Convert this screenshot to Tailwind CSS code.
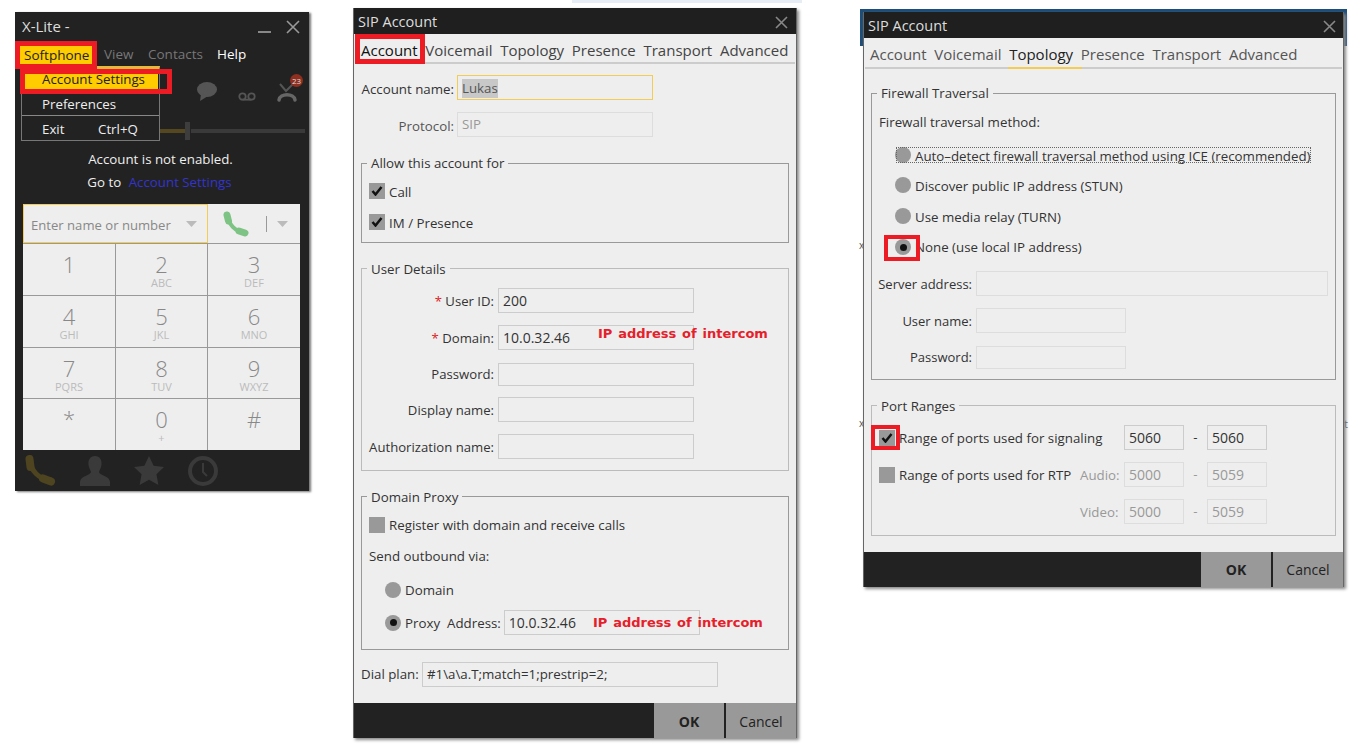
<!DOCTYPE html>
<html><head><meta charset="utf-8"><title>X-Lite SIP Account setup</title>
<script src="https://cdn.jsdelivr.net/npm/@tailwindcss/browser@4"></script></head>
<body class="bg-white">
<div class="relative w-[1365px] h-[756px] overflow-hidden bg-white font-['Open_Sans',sans-serif] text-[13.3px] text-[#333]">

<!-- stray background bits -->
<div class="absolute left-[572px] top-0 w-[230px] h-[3px] bg-[#e6edf5]"></div>
<div class="absolute left-[860px] top-[9px] w-[487px] h-[37px] bg-[#1d4e79]"></div>
<div class="absolute left-[859px] top-[238px] text-[10px] text-[#555]">x</div>
<div class="absolute left-[859px] top-[416px] text-[10px] text-[#555]">x</div>
<div class="absolute left-[1344px] top-[416px] text-[11px] text-[#555]">t</div>

<!-- X-Lite -->
<section class="absolute left-[15px] top-[12px] w-[294px] h-[479px] bg-[#222] shadow-[2px_1px_2px_#777] flex flex-col">
  <div class="h-[29px] flex items-center pl-[7px] pr-[9px] text-[15px] text-[#ddd]">
    <span>X-Lite -</span>
    <svg class="ml-auto mr-[15px] mt-[12px]" width="13" height="3"><rect width="13" height="2" fill="#888"/></svg>
    <svg width="14" height="14" viewBox="0 0 14 14"><path d="M1 1l12 12M13 1L1 13" stroke="#999" stroke-width="1.6"/></svg>
  </div>
  <div class="h-[27px] flex items-center text-[13.5px] text-[#777]">
    <span class="ml-[9px] w-[80px] text-[#222]">Softphone</span>
    <span class="w-[44px]">View</span>
    <span class="w-[69px]">Contacts</span>
    <span class="text-white">Help</span>
  </div>
  <div class="h-[53px] flex items-start justify-end pr-[12px] pt-[14px] gap-[21px]">
    <svg width="20" height="19" viewBox="0 0 20 19"><ellipse cx="10" cy="7.500" rx="10" ry="7.500" fill="#555"/><path d="M4 12l-1 7 8-5z" fill="#555"/></svg>
    <svg class="mt-[10px]" width="18" height="9" viewBox="0 0 18 9"><circle cx="4.500" cy="4.500" r="3.200" fill="none" stroke="#555" stroke-width="1.800"/><circle cx="13.500" cy="4.500" r="3.200" fill="none" stroke="#555" stroke-width="1.800"/><path d="M4.500 7.700h9" stroke="#555" stroke-width="1.800"/></svg>
    <svg class="mt-[1px]" width="20" height="19" viewBox="0 0 20 19"><path d="M3 1l6 7 7-7" fill="none" stroke="#555" stroke-width="2"/><path d="M2 17c1-7 15-7 16 0" fill="none" stroke="#666" stroke-width="3.500" stroke-linecap="round"/></svg>
  </div>
  <div class="h-[19px] flex items-center pl-[145px] pr-[4px]">
    <div class="w-[25px] h-[4px] bg-[#55471f]"></div>
    <div class="w-[5px] h-[18px] bg-[#3d3d3d]"></div>
    <div class="ml-[1px] flex-1 h-[4px] bg-[#3a3a3a]"></div>
  </div>
  <div class="mt-[8px] h-[23px] leading-[23px] text-center text-[#eee] pr-[3px]">Account is not enabled.</div>
  <div class="h-[23px] leading-[23px] text-center text-[#eee] pr-[5px]">Go to <span class="ml-[4px] text-[#3434cc]">Account Settings</span></div>
  <div class="mt-[10px] ml-[8px] w-[277px] h-[246px] bg-[#eee] flex flex-col">
    <div class="h-[39px] flex">
      <div class="w-[185px] border border-[#f3cd53] flex items-center pl-[7px] pr-[10px] pt-[4px] text-[13.1px] text-[#888]">
        <span>Enter name or number</span>
        <svg class="ml-auto mb-[4px]" width="11" height="6"><path d="M0 0h11L5.500 6z" fill="#bbb"/></svg>
      </div>
      <div class="flex-1 flex items-center pl-[15px]">
        <svg width="26" height="26" viewBox="0 0 26 26"><path d="M5 4c0 9 7 17 17 17" fill="none" stroke="#7dc383" stroke-width="4" stroke-linecap="round"/><path d="M4 4l1.500 6M16 20l6 2" stroke="#7dc383" stroke-width="7" stroke-linecap="round"/></svg>
        <div class="ml-[17px] w-px h-[16px] bg-[#999]"></div>
        <svg class="ml-[10px]" width="11" height="6"><path d="M0 0h11L5.500 6z" fill="#bbb"/></svg>
      </div>
    </div>
    <div class="flex-1 grid grid-cols-[92px_91px_92px] grid-rows-4 gap-px bg-[#999] pt-px text-center text-[#888] leading-none">
      <div class="bg-[#eee] pt-[9px]"><div class="h-[22px] text-[22px] font-light">1</div></div>
      <div class="bg-[#eee] pt-[9px]"><div class="h-[22px] text-[22px] font-light">2</div><div class="mt-[2px] text-[11px] text-[#bbb]">ABC</div></div>
      <div class="bg-[#eee] pt-[9px]"><div class="h-[22px] text-[22px] font-light">3</div><div class="mt-[2px] text-[11px] text-[#bbb]">DEF</div></div>
      <div class="bg-[#eee] pt-[9px]"><div class="h-[22px] text-[22px] font-light">4</div><div class="mt-[2px] text-[11px] text-[#bbb]">GHI</div></div>
      <div class="bg-[#eee] pt-[9px]"><div class="h-[22px] text-[22px] font-light">5</div><div class="mt-[2px] text-[11px] text-[#bbb]">JKL</div></div>
      <div class="bg-[#eee] pt-[9px]"><div class="h-[22px] text-[22px] font-light">6</div><div class="mt-[2px] text-[11px] text-[#bbb]">MNO</div></div>
      <div class="bg-[#eee] pt-[9px]"><div class="h-[22px] text-[22px] font-light">7</div><div class="mt-[2px] text-[11px] text-[#bbb]">PQRS</div></div>
      <div class="bg-[#eee] pt-[9px]"><div class="h-[22px] text-[22px] font-light">8</div><div class="mt-[2px] text-[11px] text-[#bbb]">TUV</div></div>
      <div class="bg-[#eee] pt-[9px]"><div class="h-[22px] text-[22px] font-light">9</div><div class="mt-[2px] text-[11px] text-[#bbb]">WXYZ</div></div>
      <div class="bg-[#eee] pt-[8px]"><div class="h-[22px] text-[22px] font-light">*</div></div>
      <div class="bg-[#eee] pt-[9px]"><div class="h-[22px] text-[22px] font-light">0</div><div class="mt-[2px] text-[11px] text-[#bbb]">+</div></div>
      <div class="bg-[#eee] pt-[9px]"><div class="h-[22px] text-[22px] font-light">#</div></div>
    </div>
  </div>
  <div class="flex-1 flex items-center pl-[10px] gap-[24px]">
    <svg width="31" height="31" viewBox="0 0 31 31"><path d="M5 4c0 11 9 21 21 21" fill="none" stroke="#4f4420" stroke-width="5" stroke-linecap="round"/><path d="M4.500 4l1 8M18 23.500l8 3" stroke="#4f4420" stroke-width="8" stroke-linecap="round"/></svg>
    <svg width="30" height="31" viewBox="0 0 30 31"><path d="M15 1c5 0 7 4 6.500 9-.4 3-2 5-2.500 7 0 3 11 4 11 10v4H0v-4c0-6 11-7 11-10-.5-2-2.100-4-2.500-7C8 5 10 1 15 1z" fill="#3a3a3a"/></svg>
    <svg width="30" height="29" viewBox="0 0 31 30"><path d="M15.500 0l4.800 10 10.700 1.400-7.800 7.500 2 11-9.700-5.300-9.700 5.300 2-11L0 11.400 10.700 10z" fill="#3a3a3a"/></svg>
    <svg width="30" height="30" viewBox="0 0 30 30"><circle cx="15" cy="15" r="13" fill="none" stroke="#3a3a3a" stroke-width="4"/><path d="M15 7v9l4 4" fill="none" stroke="#3a3a3a" stroke-width="2"/></svg>
  </div>
  <div class="absolute left-[275px] top-[62px] w-[13px] h-[13px] rounded-full bg-[#8e2f20] text-[8px] leading-[13px] text-center text-[#ddd]">23</div>
  <!-- dropdown menu -->
  <div class="absolute left-[6px] top-[54px] w-[139px] h-[75px] bg-[#222] border border-[#777] border-t-[3px] border-t-[#e7b93a] text-[#eee] flex flex-col">
    <div class="h-[20px] ml-[3px] w-[133px] bg-[#ffcc00] pl-[17px] leading-[20px] text-[#222]">Account Settings</div>
    <div class="h-[26px] pl-[20px] pt-[4px] leading-[22px]">Preferences</div>
    <div class="flex-1 border-t border-[#888] pl-[20px] pt-[3px] flex items-center"><span class="w-[56px]">Exit</span><span>Ctrl+Q</span></div>
  </div>
</section>
<div class="absolute left-[15px] top-[41px] w-[82px] h-[28px] border-[5px] border-[#ed1c24] bg-[#ffcc00] flex items-center pl-[4px] text-[13.5px] text-[#222]">Softphone</div>
<div class="absolute left-[20px] top-[69px] w-[152px] h-[25px] border-[5px] border-[#ed1c24]"></div>

<!-- SIP Account, Account tab -->
<section class="absolute left-[353px] top-[8px] w-[444px] h-[730px] bg-[#eee] border-x border-[#666] shadow-[2px_2px_3px_#888] flex flex-col">
  <div class="h-[26px] shrink-0 bg-[#1f1f1f] flex items-center pl-[4px] pr-[8px] pt-[2px] text-[14.5px] text-[#ddd]"><span>SIP Account</span>
    <svg class="ml-auto" width="13" height="13" viewBox="0 0 13 13"><path d="M1 1l11 11M12 1L1 12" stroke="#888" stroke-width="1.600"/></svg></div>
  <div class="relative h-[30px] shrink-0 mx-[1px] border-b-2 border-[#ccc] flex items-center gap-[7.700px] pl-[6px] pt-[4px] text-[15px] text-[#444]">
    <span class="text-[#111]">Account</span><span>Voicemail</span><span>Topology</span><span>Presence</span><span>Transport</span><span>Advanced</span>
    <div class="absolute left-0 top-0 w-[70px] h-[30px] border-[5px] border-[#ed1c24]"></div>
  </div>
  <div class="pl-[7px] pr-[7px] flex flex-col">
    <div class="mt-[11px] h-[25px] flex items-center"><div class="w-[93px] text-right pt-[4px]">Account name:</div>
      <div class="ml-[3px] w-[196px] h-[25px] border border-[#f3cd53] pl-[4px] pt-[1px] flex items-center text-[#555]"><span class="bg-[#c8c8c8] leading-[19px]">Lukas</span></div></div>
    <div class="mt-[12px] h-[25px] flex items-center"><div class="w-[93px] text-right text-[#555] pt-[4px]">Protocol:</div>
      <div class="ml-[3px] w-[196px] h-[25px] border border-[#ddd] pl-[4px] leading-[23px] text-[#999]">SIP</div></div>

    <div class="relative mt-[26px] h-[80px] border border-[#999] pl-[7px] pt-[19px]">
      <div class="absolute left-[5px] top-[-10px] px-[4px] bg-[#eee] leading-[18px]">Allow this account for</div>
      <div class="h-[16px] flex items-center gap-[4px]"><div class="w-[16px] h-[16px] bg-[#999] flex items-center justify-center"><svg width="12" height="10" viewBox="0 0 12 10"><path d="M1.500 5l3 3.500L10.500 1" fill="none" stroke="#111" stroke-width="2.500"/></svg></div><span class="pt-[3px]">Call</span></div>
      <div class="mt-[15px] h-[16px] flex items-center gap-[4px]"><div class="w-[16px] h-[16px] bg-[#999] flex items-center justify-center"><svg width="12" height="10" viewBox="0 0 12 10"><path d="M1.500 5l3 3.500L10.500 1" fill="none" stroke="#111" stroke-width="2.500"/></svg></div><span class="pt-[3px]">IM / Presence</span></div>
    </div>

    <div class="relative mt-[25px] h-[203px] border border-[#bbb] pt-[19px] text-[13.15px]">
      <div class="absolute left-[5px] top-[-9px] px-[4px] bg-[#eee] leading-[18px] text-[13.3px]">User Details</div>
      <div class="h-[25px] flex items-center"><div class="w-[132px] text-right pt-[2px]"><span class="text-[#d22]">*</span> User ID:</div><div class="ml-[4px] w-[196px] h-[25px] border border-[#ccc] pl-[4px] leading-[24px] text-[14px]">200</div></div>
      <div class="mt-[12px] h-[25px] flex items-center"><div class="w-[132px] text-right pt-[2px]"><span class="text-[#d22]">*</span> Domain:</div><div class="ml-[4px] w-[196px] h-[25px] border border-[#ccc] pl-[4px] leading-[24px] text-[14px]">10.0.32.46</div></div>
      <div class="mt-[12px] h-[24px] flex items-center"><div class="w-[132px] text-right pt-[2px]">Password:</div><div class="ml-[4px] w-[196px] h-[23px] border border-[#ccc]"></div></div>
      <div class="mt-[11px] h-[25px] flex items-center"><div class="w-[132px] text-right pt-[2px]">Display name:</div><div class="ml-[4px] w-[196px] h-[25px] border border-[#ccc]"></div></div>
      <div class="mt-[12px] h-[25px] flex items-center"><div class="w-[132px] text-right pt-[2px]">Authorization name:</div><div class="ml-[4px] w-[196px] h-[25px] border border-[#ccc]"></div></div>
    </div>

    <div class="relative mt-[25px] h-[154px] border border-[#999] pl-[7px] pt-[20px]">
      <div class="absolute left-[5px] top-[-9px] px-[4px] bg-[#eee] leading-[18px]">Domain Proxy</div>
      <div class="h-[16px] flex items-center gap-[4px]"><div class="w-[16px] h-[16px] bg-[#999]"></div><span class="pt-[1px]">Register with domain and receive calls</span></div>
      <div class="mt-[14px] h-[18px] leading-[18px]">Send outbound via:</div>
      <div class="mt-[17px] h-[16px] ml-[16px] flex items-center gap-[4px]"><div class="w-[16px] h-[16px] rounded-full bg-[#999]"></div><span class="pt-[1px]">Domain</span></div>
      <div class="mt-[12px] h-[25px] ml-[16px] flex items-center gap-[4px]">
        <div class="w-[16px] h-[16px] rounded-full bg-[#999] flex items-center justify-center"><div class="w-[7px] h-[7px] rounded-full bg-[#111]"></div></div>
        <span class="pt-[2px]">Proxy</span><span class="ml-[3px] pt-[3px]">Address:</span>
        <div class="ml-[-1px] w-[196px] h-[25px] border border-[#ccc] pl-[4px] leading-[24px] text-[14px]">10.0.32.46</div>
      </div>
    </div>

    <div class="mt-[12px] h-[25px] flex items-center"><div class="w-[58px] pt-[1px]">Dial plan:</div><div class="ml-[3px] w-[296px] h-[25px] border border-[#ccc] pl-[4px] leading-[23px]">#1\a\a.T;match=1;prestrip=2;</div></div>
  </div>
  <div class="mt-auto h-[35px] shrink-0 bg-[#222] flex justify-end pt-0 text-[14px]">
    <div class="w-[70px] bg-[#999] flex items-center justify-center pt-[2px] font-bold text-[#222]">OK</div>
    <div class="ml-[2px] w-[70px] bg-[#999] flex items-center justify-center pt-[2px] text-[#222]">Cancel</div>
  </div>
</section>
<div class="absolute left-[598px] top-[325px] font-['DejaVu_Sans',sans-serif] font-bold text-[13px] leading-[18px] text-[#e6202a] [word-spacing:1.300px] whitespace-nowrap">IP address of intercom</div>
<div class="absolute left-[593px] top-[614px] font-['DejaVu_Sans',sans-serif] font-bold text-[13px] leading-[18px] text-[#e6202a] [word-spacing:1.300px] whitespace-nowrap">IP address of intercom</div>

<!-- SIP Account, Topology tab -->
<section class="absolute left-[863px] top-[12px] w-[481px] h-[575px] bg-[#eee] border-x border-[#666] shadow-[2px_2px_3px_#888] flex flex-col">
  <div class="h-[26px] shrink-0 bg-[#1f1f1f] flex items-center pl-[4px] pr-[7px] pt-[2px] text-[14.5px] text-[#ddd]"><span>SIP Account</span>
    <svg class="ml-auto" width="13" height="13" viewBox="0 0 13 13"><path d="M1 1l11 11M12 1L1 12" stroke="#888" stroke-width="1.600"/></svg></div>
  <div class="relative h-[31px] shrink-0 mx-[1px] border-b-2 border-[#ccc] flex items-center gap-[7.700px] pl-[5px] pt-[3px] text-[15px] text-[#555]">
    <span>Account</span><span>Voicemail</span><span class="text-[#222]">Topology</span><span>Presence</span><span>Transport</span><span>Advanced</span>
    <div class="absolute left-[143px] bottom-[-2px] w-[74px] h-[2px] bg-[#f3cd53]"></div>
  </div>
  <div class="px-[7px] flex flex-col">
    <div class="relative mt-[24px] h-[287px] border border-[#999]">
      <div class="absolute left-[5px] top-[-10px] px-[4px] bg-[#eee] leading-[18px]">Firewall Traversal</div>
      <div class="mt-[19px] ml-[7px] h-[18px] leading-[18px]">Firewall traversal method:</div>
      <div class="relative mt-[16px] ml-[23px] h-[16px] flex items-center gap-[4px]"><div class="w-[16px] h-[16px] rounded-full bg-[#999]"></div><span class="pt-[3px]">Auto–detect firewall traversal method using ICE (recommended)</span>
        <div class="absolute left-[1px] top-0 w-[415px] h-[16px] border border-dotted border-[#666]"></div></div>
      <div class="mt-[14px] ml-[23px] h-[16px] flex items-center gap-[4px]"><div class="w-[16px] h-[16px] rounded-full bg-[#999]"></div><span class="pt-[3px]">Discover public IP address (STUN)</span></div>
      <div class="mt-[15px] ml-[23px] h-[16px] flex items-center gap-[4px]"><div class="w-[16px] h-[16px] rounded-full bg-[#999]"></div><span class="pt-[3px]">Use media relay (TURN)</span></div>
      <div class="relative mt-[15px] ml-[23px] h-[16px] flex items-center gap-[4px]">
        <div class="absolute left-[-11px] top-[-4px] w-[36px] h-[26px] border-[4px] border-[#ed1c24]"></div>
        <div class="relative w-[16px] h-[16px] rounded-full bg-[#999] flex items-center justify-center"><div class="w-[7px] h-[7px] rounded-full bg-[#111]"></div></div><span class="pt-[2px]">None (use local IP address)</span></div>
      <div class="mt-[16px] h-[25px] flex items-center text-[13px]"><div class="w-[100px] text-right pt-[2px]">Server address:</div><div class="ml-[4px] w-[352px] h-[25px] border border-[#ddd]"></div></div>
      <div class="mt-[12px] h-[25px] flex items-center text-[13px]"><div class="w-[100px] text-right pt-[2px]">User name:</div><div class="ml-[4px] w-[150px] h-[25px] border border-[#ddd]"></div></div>
      <div class="mt-[12px] h-[24px] flex items-center text-[13px]"><div class="w-[100px] text-right pt-[2px]">Password:</div><div class="ml-[4px] w-[150px] h-[23px] border border-[#ddd]"></div></div>
    </div>
    <div class="relative mt-[25px] h-[131px] border border-[#bbb] pl-[7px]">
      <div class="absolute left-[5px] top-[-9px] px-[4px] bg-[#eee] leading-[18px]">Port Ranges</div>
      <div class="absolute left-[-1px] top-[19px] w-[29px] h-[25px] border-[4px] border-[#ed1c24]"></div>
      <div class="relative mt-[19px] h-[25px] flex items-center">
        <div class="w-[16px] h-[16px] bg-[#999] flex items-center justify-center"><svg width="12" height="10" viewBox="0 0 12 10"><path d="M1.500 5l3 3.500L10.500 1" fill="none" stroke="#111" stroke-width="2.500"/></svg></div>
        <span class="ml-[4px] w-[225px] pt-[3px]">Range of ports used for signaling</span>
        <div class="w-[60px] h-[25px] border border-[#ccc] pl-[4px] leading-[23px] text-[14px]">5060</div><div class="w-[23px] text-center">-</div><div class="w-[60px] h-[25px] border border-[#ccc] pl-[4px] leading-[23px] text-[14px]">5060</div>
      </div>
      <div class="mt-[12px] h-[25px] flex items-center">
        <div class="w-[16px] h-[16px] bg-[#999]"></div>
        <span class="ml-[4px] w-[181px] pt-[3px]">Range of ports used for RTP</span>
        <span class="w-[44px] text-[#999] pt-[3px]">Audio:</span>
        <div class="w-[60px] h-[25px] border border-[#ddd] pl-[4px] leading-[23px] text-[14px] text-[#999]">5000</div><div class="w-[23px] text-center text-[#999]">-</div><div class="w-[60px] h-[25px] border border-[#ddd] pl-[4px] leading-[23px] text-[14px] text-[#999]">5059</div>
      </div>
      <div class="mt-[12px] h-[25px] flex items-center justify-start pl-[201px]">
        <span class="w-[44px] text-[#999] pt-[3px]">Video:</span>
        <div class="w-[60px] h-[25px] border border-[#ddd] pl-[4px] leading-[23px] text-[14px] text-[#999]">5000</div><div class="w-[23px] text-center text-[#999]">-</div><div class="w-[60px] h-[25px] border border-[#ddd] pl-[4px] leading-[23px] text-[14px] text-[#999]">5059</div>
      </div>
    </div>
  </div>
  <div class="mt-auto h-[35px] shrink-0 bg-[#222] flex justify-end text-[14px]">
    <div class="w-[70px] bg-[#999] flex items-center justify-center font-bold text-[#222]">OK</div>
    <div class="ml-[2px] w-[70px] bg-[#999] flex items-center justify-center text-[#222]">Cancel</div>
  </div>
</section>
</div>
</body></html>
